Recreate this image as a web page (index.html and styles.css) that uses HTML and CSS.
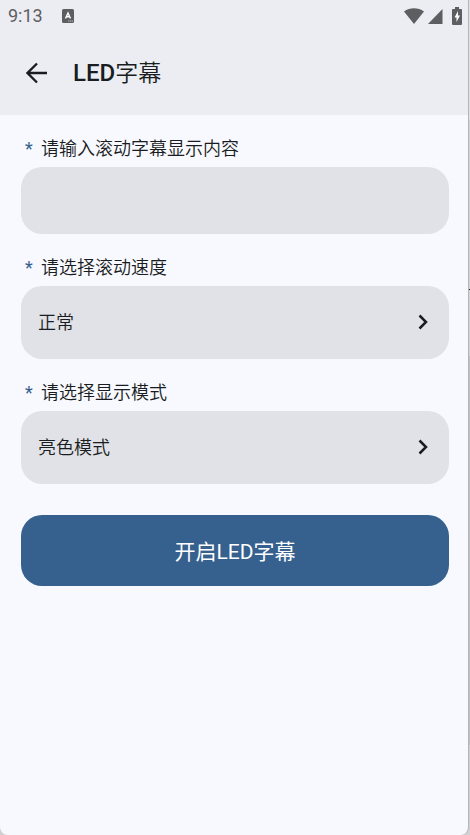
FILE: index.html
```html
<!DOCTYPE html>
<html lang="zh-CN">
<head>
<meta charset="utf-8">
<meta name="viewport" content="width=device-width, initial-scale=1">
<title>LED字幕</title>
<link rel="stylesheet" href="styles.css">
</head>
<body>
<div class="screen">
  <header class="top">
    <div class="status">
      <time class="clock">9:13</time>
      <svg class="status-app" width="12" height="14" viewBox="0 0 12 14" aria-hidden="true">
        <rect width="12" height="14" rx="1.5" fill="#5d5e62"/>
        <path d="M3.500 9.500 6 4l2.500 5.500M4.500 7.800h3" fill="none" stroke="#fff" stroke-width="1.400"/>
        <path d="M6 12h5" stroke="#b9babd" stroke-dasharray="1.500 .5"/>
      </svg>
      <div class="status-icons">
        <svg width="20" height="16" viewBox="0 0 20 16" aria-hidden="true"><path d="M0 3.500C6-.9 14-.9 20 3.500L10 16z" fill="#5d5e62"/></svg>
        <svg width="15" height="16" viewBox="0 0 15 16" aria-hidden="true"><path d="M14.500 1v15H0z" fill="#5d5e62"/></svg>
        <svg class="battery" width="10" height="18" viewBox="0 0 10 18" aria-hidden="true"><path d="M3 0h4v2h2q1 0 1 1v14q0 1-1 1H1q-1 0-1-1V3q0-1 1-1h2z" fill="#5d5e62"/><path d="M6 4 2.500 10.500h2V15L8 8.500H6z" fill="#fff"/></svg>
      </div>
    </div>
    <div class="appbar">
      <button class="back" type="button" aria-label="返回">
        <svg width="22" height="22" viewBox="0 0 22 22" aria-hidden="true"><path d="M21 11H2M11 1.500 1.500 11l9.500 9.500" fill="none" stroke="#191c20" stroke-width="2.300"/></svg>
      </button>
      <h1 class="title">LED<span class="title-cjk">字幕</span></h1>
    </div>
  </header>
  <form class="form">
    <label class="label" for="content"><span class="star">*</span>请输入滚动字幕显示内容</label>
    <input class="field field-text" id="content" type="text">
    <label class="label" for="speed"><span class="star">*</span>请选择滚动速度</label>
    <div class="picker">
      <select class="field field-select" id="speed"><option>正常</option></select>
      <svg class="chevron" width="12" height="16" viewBox="0 0 12 16" aria-hidden="true"><path d="m1.500 1.500 6.500 6.500L1.500 14.500" fill="none" stroke="#191c20" stroke-width="2.500"/></svg>
    </div>
    <label class="label" for="mode"><span class="star">*</span>请选择显示模式</label>
    <div class="picker">
      <select class="field field-select" id="mode"><option>亮色模式</option></select>
      <svg class="chevron" width="12" height="16" viewBox="0 0 12 16" aria-hidden="true"><path d="m1.500 1.500 6.500 6.500L1.500 14.500" fill="none" stroke="#191c20" stroke-width="2.500"/></svg>
    </div>
    <button class="submit" type="button">开启LED字幕</button>
  </form>
</div>
</body>
</html>
```
FILE: styles.css
```css
* {
  box-sizing: border-box;
}

body {
  margin: 0;
  padding-right: 1px;
  background: linear-gradient(#e2e2e5 0 120px, #d4d4d6 120px 289px, #222 289px 290px, #d4d4d6 290px 356px, #bebec0 356px 745px, #d0d0d2 745px);
  color: #191c20;
  font-family: Roboto, "Noto Sans CJK SC", sans-serif;
}

.screen {
  min-height: 100vh;
  border-right: 1px solid #b4b5b9;
  border-radius: 0 0 8px 8px;
  background: #f8f9ff;
  overflow: hidden;
}

.top {
  height: 115px;
  background: #ecedf2;
}

.status {
  display: flex;
  align-items: center;
  height: 32px;
  padding: 0 6px 0 8px;
  color: #5d5e62;
}

.clock {
  font-size: 18px;
  line-height: 32px;
}

.status-app {
  margin-left: 19px;
}

.status-icons {
  display: flex;
  align-items: center;
  gap: 4px;
  margin-left: auto;
}

.battery {
  margin-left: 5px;
}

.appbar {
  display: flex;
  align-items: center;
  height: 82px;
  padding-left: 26px;
}

.back {
  display: flex;
  padding: 0;
  border: 0;
  background: none;
}

.title {
  margin: 0 0 0 25px;
  font-size: 24px;
  font-weight: 500;
  line-height: 34px;
}

.title-cjk {
  font-size: 23px;
  font-weight: 350;
}

.form {
  display: flex;
  flex-direction: column;
  padding: 0 19px 20px 21px;
}

.label {
  display: flex;
  margin: 21px 0 5px;
  padding-left: 4px;
  font-size: 18px;
  font-weight: 350;
  line-height: 26px;
}

.star {
  width: 16px;
  color: #36618e;
  font-weight: 400;
}

.field {
  display: block;
  width: 100%;
  padding: 0 17px;
  border: 0;
  border-radius: 21px;
  outline: 0;
  background: #e1e2e7;
  color: inherit;
  font: inherit;
  font-size: 18px;
  font-weight: 350;
}

.field-text {
  height: 67px;
}

.field-select {
  height: 73px;
  appearance: none;
}

.picker {
  position: relative;
}

.chevron {
  position: absolute;
  top: 28px;
  right: 19px;
  pointer-events: none;
}

.submit {
  height: 71px;
  margin-top: 31px;
  padding: 0 0 2px;
  border: 0;
  border-radius: 21px;
  background: #36618e;
  color: #fff;
  font: inherit;
  font-size: 21px;
}
```
